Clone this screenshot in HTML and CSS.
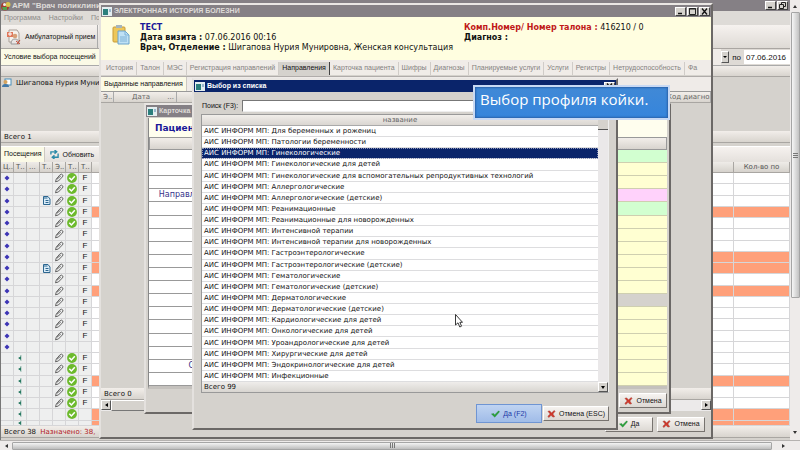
FILE: index.html
```html
<!DOCTYPE html>
<html lang="ru">
<head>
<meta charset="utf-8">
<title>Электронная история болезни</title>
<link rel="stylesheet" href="styles.css">
</head>
<body>
<svg class="defs" aria-hidden="true">
  <symbol id="i-win" viewBox="0 0 10 9"><rect width="10" height="9" fill="#e4eef0"/><rect x="1" y="2" width="5" height="6" fill="#2c7f7c"/><rect x="7" y="2" width="2" height="3" fill="#9bb9cf"/></symbol>
  <symbol id="i-ok" viewBox="0 0 10 10"><circle cx="5" cy="5" r="4.9" fill="#6cba2c"/><path d="M2.3 4.8 4.4 7 7.8 3.2" fill="none" stroke="#fff" stroke-width="1.5"/></symbol>
  <symbol id="i-pen" viewBox="0 0 10 10"><path d="M1.5 8.8 2.3 6 6.2 1.6Q7.6.6 8.6 1.8T8.3 4L4.4 8Z M3 6.2 6.8 3" fill="none" stroke="#555" stroke-width=".9"/></symbol>
  <symbol id="i-doc" viewBox="0 0 8 9"><path d="M1 .5h4.500L7.500 3v5.500H1Z" fill="#d9ecf8" stroke="#2c6790"/><path d="M1 2h4M3 4.500h3M3 6.500h3" stroke="#2c6790"/></symbol>
  <symbol id="i-dot" viewBox="0 0 6 6"><path d="M3 .5 5.500 3 3 5.500.5 3Z" fill="#3d35b5"/></symbol>
  <symbol id="i-arr" viewBox="0 0 6 8"><path d="M4.600 0v8L3.500 6.500V5.500L1.200 5V3L3.500 2.500V1Z" fill="#287a62"/></symbol>
  <symbol id="i-check" viewBox="0 0 10 8"><path d="M.5 4 3 3.500 4 5 8.500.5 9.500 1.500 4.200 7.500Z" fill="#2aa338" stroke="#1c7a35" stroke-width=".4"/></symbol>
  <symbol id="i-x" viewBox="0 0 10 9"><path d="M1 1.500 3 1 5 3.500 8 .5 9 1.500 6.500 4.500 8.500 7.500 6.500 8 4.500 6 2 8.500 1 7 3.500 4.500Z" fill="#d3392c" stroke="#98281f" stroke-width=".5"/></symbol>
  <symbol id="i-min" viewBox="0 0 9 7"><path d="M2 5.500h4" stroke="#111" stroke-width="1.500"/></symbol>
  <symbol id="i-max" viewBox="0 0 9 7"><path d="M1.500.5h6v6h-6Z M1 1h7" fill="none" stroke="#222"/></symbol>
  <symbol id="i-restore" viewBox="0 0 9 7"><path d="M3.500 2V.5h4v4H6M1.500 2.500h4v4h-4Z" fill="none" stroke="#222"/></symbol>
  <symbol id="i-close" viewBox="0 0 9 7"><path d="m2 .5 5 6M7 .5l-5 6" stroke="#111" stroke-width="1.300"/></symbol>
</svg>

<main class="app">
  <header class="titlebar app-title">
    <svg class="app-logo" viewBox="0 0 10 10"><circle cx="4" cy="5.500" r="4" fill="#a63b2f"/><circle cx="7" cy="3.500" r="2.500" fill="#d8c34c"/><path d="M1 6h5v3H2Z" fill="#54a34e"/><circle cx="3.500" cy="3.500" r="1.500" fill="#eee"/></svg>
    <span class="title">АРМ "Врач поликлиники"</span>
    <span class="winbtns"><button class="wb" aria-label="Свернуть"><svg><use href="#i-min"/></svg></button><button class="wb" aria-label="Восстановить"><svg><use href="#i-restore"/></svg></button></span>
  </header>
  <nav class="menu"><a href="#">Программа</a><a href="#">Настройки</a><a href="#">Помощь</a></nav>
  <div class="toolbar">
    <button class="tool">
      <svg class="tool-icon" viewBox="0 0 16 16"><path d="M3 1h8l2 3v9H3Z" fill="#f5f1ec" stroke="#a99f98"/><path d="M1 3h6v5H1Z" fill="#df765a"/><path d="M2 5h4M4 3v4" stroke="#fff"/><circle cx="9" cy="7" r="2.300" fill="#d8a078"/><path d="M5 15q0-5 4-5t4 5Z" fill="#e9e6e5" stroke="#999"/><path d="m10 12 4 3M14 11l-3 4" stroke="#c34c36"/></svg>
      Амбулаторный прием</button>
  </div>
  <div class="filter">
    <span class="tab-on">Условие выбора посещений</span>
    <div class="dates"><button class="drop" aria-label="Выбрать дату"></button><label for="to">по</label><input id="to" value="07.06.2016"></div>
  </div>
  <div class="bar patients-head"></div>
  <div class="patients">
    <svg class="person" viewBox="0 0 10 10"><rect x="3" y="1" width="6" height="6" fill="#fff" stroke="#4a8eb8"/><circle cx="3.500" cy="4" r="2" fill="#d6a35d"/><path d="M0 9q0-3 3.500-3T7 9Z" fill="#4379a8"/></svg>
    Шигапова Нурия Мунировна
  </div>
  <div class="bar foot">Всего 1</div>
  <div class="visits-bar"><span class="tab-on">Посещения</span>
    <button class="refresh"><svg viewBox="0 0 10 10"><path d="M1 5V2h6M5 0l2.500 2L5 4M9 4v4H3M5 6 2.500 8 5 10" fill="none" stroke="#2b8aa8" stroke-width="1.500"/></svg>Обновить</button></div>
  <table class="visits">
    <thead><tr><th>Ц..</th><th>Т..</th><th>...</th><th>Т..</th><th>Э..</th><th>Т..</th><th>Т..</th><th></th><th>Кол-во по</th></tr></thead>
    <tbody id="visits"></tbody>
  </table>
  <div class="bar foot">Всего 38 <span class="assigned">Назначено: 38,</span></div>
</main>

<div class="vscroll"><i class="up"></i><i class="thumb"></i><i class="down"></i></div>
<div class="hscroll"><i class="left"></i><i class="thumb"></i><i class="right"></i></div>

<section class="window history">
  <header class="titlebar"><svg class="wi"><use href="#i-win"/></svg><span class="title">ЭЛЕКТРОННАЯ ИСТОРИЯ БОЛЕЗНИ</span>
    <span class="winbtns"><button class="wb" aria-label="Свернуть"><svg><use href="#i-min"/></svg></button><button class="wb" aria-label="Развернуть"><svg><use href="#i-max"/></svg></button><button class="wb" aria-label="Закрыть"><svg><use href="#i-close"/></svg></button></span></header>
  <div class="patient">
    <svg class="clip" viewBox="0 0 18 20"><rect x="1" y="2" width="12" height="15" rx="1" fill="#edc75a" stroke="#c99b37"/><rect x="4" y="0" width="6" height="3" fill="#a5b5bd"/><path d="M6 6h7l4 4v9H6Z" fill="#bfe1f5" stroke="#6ba3cc"/><path d="M13 6v4h4M8 12h7M8 14h7M8 16h7" fill="none" stroke="#7fb2d6"/></svg>
    <div class="facts"><b class="name">ТЕСТ</b><span><b>Дата визита :</b> 07.06.2016 00:16</span><span><b>Врач, Отделение :</b> Шигапова Нурия Мунировна, Женская консультация</span></div>
    <div class="facts right"><span><b class="red">Комп.Номер/ Номер талона :</b> 416210 / 0</span><b>Диагноз :</b></div>
  </div>
  <nav class="tabs"><a href="#">История</a><a href="#">Талон</a><a href="#">МЭС</a><a href="#">Регистрация направлений</a><a href="#" class="on">Направления</a><a href="#">Карточка пациента</a><a href="#">Шифры</a><a href="#">Диагнозы</a><a href="#">Планируемые услуги</a><a href="#">Услуги</a><a href="#">Регистры</a><a href="#">Нетрудоспособность</a><a href="#">Фа</a></nav>
  <div class="subbar"><span class="tab-on">Выданные направления</span></div>
  <div class="bar issued-head"><span>Э..</span><span>Дата<em>...</em></span><span></span><span>Код диагноза</span></div>
  <div class="issued"></div>
  <div class="bar foot">Всего 0</div>
  <div class="inner-h"><button class="sb left" aria-label="Влево"></button><span></span><button class="sb right" aria-label="Вправо"></button></div>
  <div class="actions"><button class="btn"><svg><use href="#i-check"/></svg>Да</button><button class="btn"><svg><use href="#i-x"/></svg>Отмена</button></div>
</section>

<section class="window card">
  <header class="titlebar"><svg class="wi"><use href="#i-win"/></svg><span class="title">Карточка</span></header>
  <div class="card-body">
    <div class="card-name">Пациент</div>
    <div class="bar card-head"></div>
    <div class="card-rows" id="card"></div>
  </div>
  <div class="actions"><button class="btn"><svg><use href="#i-x"/></svg>Отмена</button></div>
</section>

<section class="window dialog" role="dialog" aria-labelledby="dt">
  <header class="titlebar active"><svg class="wi"><use href="#i-win"/></svg><span class="title" id="dt">Выбор из списка</span>
    <span class="winbtns"><button class="wb" aria-label="Закрыть"><svg><use href="#i-close"/></svg></button></span></header>
  <div class="search"><label for="q">Поиск (F3):</label><input id="q"></div>
  <div class="pick">
    <table class="list">
      <thead><tr><th>название</th></tr></thead>
      <tbody id="list"></tbody>
      <tfoot><tr><td>Всего 99</td></tr></tfoot>
    </table>
    <div class="list-scroll"><i></i><button class="sb down" aria-label="Вниз"></button></div>
  </div>
  <div class="actions"><button class="btn primary"><svg><use href="#i-check"/></svg>Да (F2)</button><button class="btn"><svg><use href="#i-x"/></svg>Отмена (ESC)</button></div>
</section>

<div class="callout">Выбор профиля койки.</div>
<svg class="cursor" viewBox="0 0 8 14"><path d="M.5.5v10.500L3 8.800 4.800 13 6.500 12.200 4.900 8.300H7.500Z" fill="#fff" stroke="#222" stroke-width=".9"/></svg>
<script src="app.js"></script>
</body>
</html>
```
FILE: styles.css
```css
* { box-sizing: border-box; }
:root {
  --face: #d5d2cd;
  --ui: "Liberation Sans", sans-serif;
  --wide: "DejaVu Sans", sans-serif;
}
body {
  margin: 0;
  height: 100vh;
  overflow: hidden;
  display: grid;
  grid-template: 1fr 10px / 1fr 10px;
  background: var(--face);
  color: #111;
  font: 7px/10px var(--ui);
}
button, input { font: inherit; color: inherit; margin: 0; padding: 0; border: 0; border-radius: 0; }
a { color: inherit; text-decoration: none; }
.defs { position: absolute; width: 0; height: 0; }

.app { display: flex; flex-direction: column; min-width: 0; min-height: 0; border-left: 1px solid #777; padding-bottom: 2px; }
.titlebar { display: flex; align-items: center; gap: 2px; height: 12px; flex: none; background: #858085; color: #dedbd8; font-weight: bold; white-space: nowrap; padding: 0 1px; }
.titlebar.active { background: #0a246a; color: #fff; }
.title { flex: 1; }
.wi { width: 10px; height: 9px; flex: none; }
.app-logo { width: 10px; height: 10px; flex: none; }
.app-title { height: 11px; padding: 0 2px 0 0; gap: 1px; font-size: 8px; }
.winbtns { display: flex; gap: 1px; }
.wb { display: flex; width: 11px; height: 9px; background: var(--face); border: 1px solid; border-color: #fff #444 #444 #fff; }
.wb svg { width: 9px; height: 7px; }

.menu { display: flex; gap: 8px; height: 14px; padding: 1px 3px; color: #8d8a88; line-height: 12px; background: #dedbd7; flex: none; }
.toolbar { height: 24px; flex: none; background: linear-gradient(#f6f2ef, #dedad5); border-bottom: 1px solid #aaa6a2; }
.tool { display: flex; align-items: center; gap: 3px; width: 97px; height: 23px; padding-left: 5px; background: none; border-right: 1px solid #aaa; white-space: nowrap; }
.tool-icon { width: 16px; height: 16px; flex: none; }
.filter { display: flex; justify-content: space-between; height: 16px; flex: none; background: #f0ece8; line-height: 15px; }
.tab-on { background: #fbfae6; padding: 0 3px; color: #111; white-space: nowrap; border-right: 1px solid #ccc8c2; }
.filter .tab-on { padding-right: 12px; font-size: 8px; font-size: 7px; }
.dates { display: flex; gap: 3px; align-items: center; background: #dedad5; font-size: 8px; }
.drop { width: 8px; height: 12px; background: var(--face); border: 1px solid; border-color: #fff #555 #555 #fff; position: relative; }
.drop::after { content: ""; position: absolute; left: 1px; top: 4px; border: 2px solid transparent; border-top-color: #000; }
.dates input { width: 46px; height: 14px; padding-left: 2px; background: #fff; }
.bar { background: linear-gradient(#f2eeea, #d8d4ce); border-bottom: 1px solid #a9a6a2; flex: none; }
.patients-head { height: 12px; border-top: 1px solid #aaa; }
.patients { display: flex; gap: 4px; height: 54px; flex: none; padding: 1px 1px; font: 7px/10px var(--wide); white-space: nowrap; overflow: hidden; }
.person { width: 10px; height: 10px; flex: none; }
.foot { height: 12px; padding-left: 3px; font: 7px/12px var(--wide); white-space: nowrap; }
.assigned { color: #b22024; margin-left: 2px; }
.visits-bar { display: flex; height: 16px; flex: none; margin-top: 3px; background: linear-gradient(#f6f2ef, #e4e0dc); border-top: 1px solid #fff; line-height: 14px; }
.refresh { display: flex; align-items: center; gap: 3px; padding-left: 5px; background: none; }
.refresh svg { width: 9px; height: 9px; }
.visits { display: flex; flex-direction: column; flex: 1; min-height: 0; }
.visits tr { display: grid; grid-template-columns: repeat(7, 13px) 1fr 56px; }
.visits th { height: 11px; overflow: hidden; background: linear-gradient(#efece8, #d6d2cc); border: solid #a9a6a2; border-width: 0 1px 1px 0; padding: 0 2px; text-align: left; color: #555; font: 7px/10px var(--wide); }
.visits th:last-child { text-align: center; white-space: nowrap; }
.visits tbody { flex: 1; display: flex; flex-direction: column; min-height: 0; overflow: hidden; }
.visits tbody tr { flex: 2; min-height: 0; overflow: hidden; }
.visits tbody tr.part { flex: 1; }
.visits td { display: flex; align-items: center; justify-content: center; min-height: 0; padding: 0; background: #eeefef; border: solid #d6d6d8; border-width: 0 1px 1px 0; overflow: hidden; font: 8px/10px var(--ui); }
.visits td:nth-child(n+8) { background: #fff; }
.visits .hot td:nth-child(n+8) { background: #ffa07a; }
.visits td svg { width: 10px; height: 10px; flex: none; }
.visits td svg.s { width: 6px; height: 6px; }
.visits td svg.p { width: 9px; height: 9px; }

.vscroll, .hscroll { display: flex; background: #eeebea; }
.vscroll { flex-direction: column; grid-column: 2; grid-row: 1; align-items: center; }
.hscroll { grid-column: 1 / 3; grid-row: 2; align-items: center; border-top: 1px solid #b5b2b0; }
.thumb { display: flex; align-items: center; justify-content: center; border: 1px solid #a5a5a5; border-radius: 1px; }
.thumb::after { content: ""; width: 5px; height: 5px; background: repeating-linear-gradient(#777 0 1px, transparent 1px 2px); }
.vscroll .thumb { width: 9px; height: 65%; background: linear-gradient(90deg, #f6f6f6, #c2c2c2); margin: 4px 0 auto; }
.hscroll .thumb { height: 8px; width: 95%; background: linear-gradient(#f3f3f3, #bdbdbd); margin: 0 auto 0 4px; }
.hscroll .thumb::after { background: repeating-linear-gradient(90deg, #777 0 1px, transparent 1px 2px); }
.up, .down:not(button) { border: 2px solid transparent; }
.up { border-bottom-color: #333; margin-top: 2px; border-top: 0; height: 6px; border-bottom-width: 3px; }
.vscroll .down { border-top: 3px solid #333; margin-bottom: 4px; }
.hscroll .left, .hscroll .right { border: 2px solid transparent; }
.hscroll .left { border-right: 3px solid #333; margin-left: 3px; }
.hscroll .right { border-left: 3px solid #333; margin-right: 13px; }

.window { position: absolute; display: flex; flex-direction: column; background: var(--face); border: 2px solid; border-color: #eae7e4 #6b6866 #6b6866 #e4e1de; }
.history { inset: 3px 87px 11px 99px; }
.patient { display: flex; height: 43px; flex: none; background: #fffee0; padding: 5px 11px; font: 8px/10px var(--wide); white-space: nowrap; }
.facts { display: flex; flex-direction: column; flex: none; width: 324px; padding-top: 1px; }
.facts.right { width: auto; }
.clip { width: 18px; height: 20px; margin: 3px 10px 0 0; flex: none; }
.name { color: #1b1998; }
.red { color: #c01818; }
.tabs { display: flex; height: 15px; flex: none; background: #f0ece8; color: #858280; line-height: 12px; padding: 2px 8px 0 2px; white-space: nowrap; overflow: hidden; }
.tabs a { padding: 0 3px; border-right: 1px solid #d0ccc8; }
.tabs a:last-child { border: 0; }
.tabs .on { background: var(--face); color: #111; border-right-color: #444; }
.subbar { display: flex; height: 15px; flex: none; margin-top: 1px; background: #efebe8; border-top: 1px solid #b0acaa; line-height: 14px; }
.issued-head { display: grid; grid-template-columns: 13px 63px 1fr 46px; height: 12px; border-top: 1px solid #999; color: #666; font: 7px/10px var(--wide); }
.issued-head span { border-right: 1px solid #aaa; padding-left: 2px; overflow: hidden; white-space: nowrap; }
.issued-head span:nth-child(2) { padding-left: 18px; }
.issued-head em { float: right; font-style: normal; margin-right: 2px; }
.issued { flex: 1; }
.inner-h { display: flex; height: 11px; background: #eceaea; flex: none; }
.inner-h span { width: 60%; border: 1px solid; border-color: #fff #777 #777 #fff; background: var(--face); }
.inner-h .right { margin-left: auto; }
.sb { width: 10px; height: 10px; background: var(--face); border: 1px solid; border-color: #fff #555 #555 #fff; display: flex; align-items: center; justify-content: center; }
.sb::after { content: ""; border: 2px solid transparent; }
.sb.left::after { border-right: 3px solid #000; border-left: 0; }
.sb.right::after { border-left: 3px solid #000; border-right: 0; }
.sb.down::after { border-top: 3px solid #000; border-bottom: 0; }
.actions { display: flex; justify-content: flex-end; align-items: center; gap: 4px; flex: none; }
.btn { display: flex; align-items: center; justify-content: center; gap: 3px; min-width: 48px; height: 15px; padding: 0 4px; background: linear-gradient(#f6f3f0, #dcd8d3); border: 1px solid; border-color: #fff #77736f #77736f #fff; white-space: nowrap; }
.btn svg { width: 9px; height: 8px; flex: none; }
.history .actions { height: 26px; padding-right: 6px; }

.card { inset: 103px 129px 36px 144px; }
.card .titlebar { margin-bottom: 1px; }
.card-body { flex: 1; display: flex; flex-direction: column; margin: 0 2px; border-left: 1px solid #888; border-bottom: 3px solid #c4c1bd; min-height: 0; }
.card-name { height: 19px; flex: none; padding-left: 6px; background: #fffeee; color: #1b1998; font: bold 9px/20px var(--wide); }
.card-head { height: 13px; border: 1px solid #999; }
.card-rows { flex: 1; display: flex; flex-direction: column; background: #fff; min-height: 0; }
.card-row { flex: 1; display: grid; grid-template-columns: 66px 1fr; align-items: stretch; border-bottom: 1px solid #999; min-height: 0; }
.card-row span { text-align: right; color: #35318a; font: 8px/12px var(--wide); }
.card-row i { background: linear-gradient(90deg, #fff 50%, #ffffd2 50%); box-shadow: 0 1px #cfcfb0; }
.card-row .green { background: #d2ffd0; }
.card-row .pink { background: #ffd2fb; }
.card-row .gray { background: var(--face); }
.card .actions { height: 23px; padding-right: 2px; }

.dialog { inset: 78px 182px 20px 192px; }
.search { display: flex; align-items: center; gap: 4px; height: 22px; flex: none; padding: 5px 7px 0 8px; }
.search input { flex: 1; height: 12px; background: #fff; border: 1px solid; border-color: #777 #eee #eee #777; }
.pick { flex: 1; display: flex; min-height: 0; margin: 0 7px; border: 1px solid #8e8b88; border-color: #999 #eee #999 #999; }
.list { flex: 1; display: flex; flex-direction: column; min-width: 0; }
.list tr, .list th, .list td { display: block; padding: 0; }
.list th { height: 11px; background: linear-gradient(#f1eeea, #dad6d1); border-bottom: 1px solid #aaa; color: #666; font: 7px/10px var(--wide); text-align: center; }
.list tbody { flex: 1; display: grid; grid-auto-rows: minmax(0, 1fr); min-height: 0; background: #fff; }
.list tbody tr { display: flex; align-items: center; min-height: 0; padding-left: 2px; border-bottom: 1px solid #dddddf; overflow: hidden; white-space: nowrap; font: 7px/10px var(--wide); }
.list tbody .sel { background: #0a246a; color: #fff; outline: 1px dotted #8d95b8; outline-offset: -1px; }
.list tfoot td { height: 10px; padding-left: 2px; font: 7px/10px var(--wide); background: linear-gradient(#efedeb, #d8d5d0); }
.list-scroll { width: 10px; background: #eae8e9; display: flex; flex-direction: column; justify-content: space-between; }
.list-scroll i { height: 15px; background: var(--face); border-bottom: 1px solid #555; }
.dialog .actions { height: 35px; padding: 6px 7px 0; gap: 1px; }
.dialog .btn { width: 66px; }
.btn.primary { height: 19px; background: linear-gradient(#c0d4f2, #a0bce8); border-color: #6f95d3; color: #2039a8; }

.callout { position: absolute; left: 473px; top: 85px; padding: 2px 20px 9px 5px; background: linear-gradient(#4189d6, #3585dc); border: 2px solid #c8d9f3; box-shadow: inset 0 0 2px 1px #2962ac; color: #fff; font: 15px/20px "Open Sans", sans-serif; white-space: nowrap; }
.cursor { position: absolute; left: 455px; top: 314px; width: 8px; height: 14px; }
```
FILE: app.js
```js
const icon = (id, cls = '') => `<svg class="${cls}"><use href="#i-${id}"/></svg>`;

const hot = [4, 8, 9, 11, 19, 22, 23];
document.getElementById('visits').innerHTML = Array.from({ length: 23 }, (_, k) => {
  const n = k + 1;
  const cells = [
    n <= 16 ? icon('dot', 's') : '',
    n > 16 ? icon('arr', 's') : '',
    '',
    n === 3 || n === 9 ? icon('doc', 'p') : '',
    n !== 16 && n < 22 ? icon('pen') : '',
    n <= 5 || (n >= 17 && n < 23) ? icon('ok') : '',
    n !== 16 && n < 22 ? 'F' : '',
    '', ''
  ];
  const cls = [hot.includes(n) ? 'hot' : '', n === 23 ? 'part' : ''].join(' ');
  return `<tr class="${cls}">${cells.map(c => `<td>${c}</td>`).join('')}</tr>`;
}).join('');

const fills = { 1: 'green', 4: 'pink', 5: 'green', 12: 'gray' };
const labels = { 4: 'Направление', 17: 'Отдел' };
document.getElementById('card').innerHTML = Array.from({ length: 18 }, (_, k) =>
  `<div class="card-row"><span>${labels[k + 1] || ''}</span><i class="${fills[k + 1] || ''}"></i></div>`).join('');

const profiles = [
  'Для беременных и рожениц', 'Патологии беременности', 'Гинекологические',
  'Гинекологические для детей', 'Гинекологические для вспомогательных репродуктивных технологий',
  'Аллергологические', 'Аллергологические (детские)', 'Реанимационные',
  'Реанимационные для новорожденных', 'Интенсивной терапии', 'Интенсивной терапии для новорожденных',
  'Гастроэнтерологические', 'Гастроэнтерологические (детские)', 'Гематологические',
  'Гематологические (детские)', 'Дерматологические', 'Дерматологические (детские)',
  'Кардиологические для детей', 'Онкологические для детей', 'Уроандрологические для детей',
  'Хирургические для детей', 'Эндокринологические для детей', 'Инфекционные'
];
document.getElementById('list').innerHTML = profiles.map((p, k) =>
  `<tr class="${k === 2 ? 'sel' : ''}"><td>АИС ИНФОРМ МП: ${p}</td></tr>`).join('');
```
